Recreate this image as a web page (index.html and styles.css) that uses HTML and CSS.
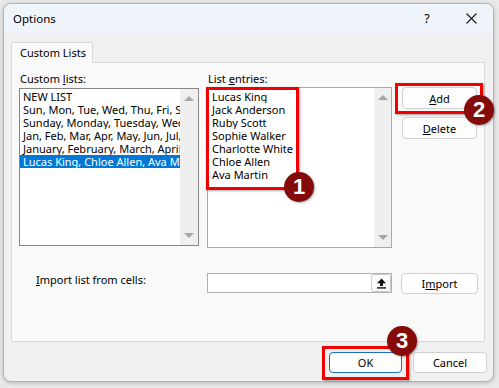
FILE: index.html
```html
<!DOCTYPE html>
<html>
<head>
<meta charset="utf-8">
<link rel="stylesheet" href="styles.css">
</head>
<body>
<div class="stage">
  <div class="window">
    <div class="titlebar">
      <span class="title">Options</span>
      <span class="help">?</span>
      <span class="close"><svg width="11" height="11" viewBox="0 0 11 11"><path d="M0.5 0.5 L10.5 10.5 M10.5 0.5 L0.5 10.5" stroke="#1a1a1a" stroke-width="1.1" fill="none"/></svg></span>
    </div>
    <div class="client">
      <div class="tabs"><div class="tab">Custom Lists</div></div>
      <div class="panel">
        <div class="lists">
          <div class="col col-left">
            <div class="label">Custom <u>l</u>ists:</div>
            <div class="listbox lb-left">
              <div class="items">
                <div class="item">NEW LIST</div>
                <div class="item">Sun, Mon, Tue, Wed, Thu, Fri, Sat</div>
                <div class="item">Sunday, Monday, Tuesday, Wednesday, Thursday, Friday, Saturday</div>
                <div class="item">Jan, Feb, Mar, Apr, May, Jun, Jul, Aug, Sep, Oct, Nov, Dec</div>
                <div class="item">January, February, March, April, May, June</div>
                <div class="item sel">Lucas King, Chloe Allen, Ava Martin</div>
              </div>
              <div class="scrollbar"><span class="arr up"></span><span class="arr down"></span></div>
            </div>
          </div>
          <div class="col col-mid">
            <div class="label">List <u>e</u>ntries:</div>
            <div class="listbox lb-mid">
              <div class="items entries">
                <div class="item">Lucas King</div>
                <div class="item">Jack Anderson</div>
                <div class="item">Ruby Scott</div>
                <div class="item">Sophie Walker</div>
                <div class="item">Charlotte White</div>
                <div class="item">Chloe Allen</div>
                <div class="item">Ava Martin</div>
              </div>
              <div class="scrollbar"><span class="arr up"></span><span class="arr down"></span></div>
            </div>
          </div>
          <div class="col col-right">
            <button class="btn side-btn"><u>A</u>dd</button>
            <button class="btn side-btn"><u>D</u>elete</button>
          </div>
        </div>
        <div class="import-row">
          <div class="import-label"><u>I</u>mport list from cells:</div>
          <div class="ref-input">
            <span class="ref-btn"><svg width="11" height="11" viewBox="0 0 11 11"><path d="M5.5 0.5 L10 5.2 L7 5.2 L7 8 L4 8 L4 5.2 L1 5.2 Z" fill="#111"/><rect x="1" y="9.2" width="9" height="1.4" fill="#111"/></svg></span>
          </div>
          <button class="btn import-btn">I<u>m</u>port</button>
        </div>
      </div>
      <div class="footer">
        <button class="btn ok">OK</button>
        <button class="btn cancel">Cancel</button>
      </div>
    </div>
  </div>

  <div class="mark box1"></div>
  <div class="mark box2"></div>
  <div class="mark box3"></div>
  <div class="badge b1">1</div>
  <div class="badge b2">2</div>
  <div class="badge b3">3</div>
</div>
</body>
</html>
```

FILE: styles.css
```css
* { box-sizing: border-box; }
html, body { margin: 0; padding: 0; }
body {
  background: #e9e9e9;
  font-family: "Noto Sans", "Open Sans", sans-serif;
  font-size: 11px;
  color: #000;
}
.stage {
  position: relative;
  width: 499px;
  height: 388px;
  overflow: hidden;
  padding: 3px 0 0 3px;
}
.window {
  width: 491px;
  height: 379px;
  border: 1px solid #b4b4b4;
  border-radius: 8px;
  overflow: hidden;
  background: #f0f0f0;
  box-shadow: 0 1px 4px rgba(0,0,0,0.22);
}
.titlebar {
  height: 29px;
  background: #eef4f9;
  display: flex;
  align-items: center;
}
.title {
  padding-left: 9px;
  flex: 1;
  font-size: 11.5px;
}
.help {
  width: 44px;
  text-align: center;
  font-size: 12.5px;
}
.close {
  width: 44px;
  display: flex;
  justify-content: center;
  align-items: center;
}
.client {
  padding: 9px 6px 0 7px;
}
.tabs {
  display: flex;
  height: 20px;
}
.tab {
  width: 82px;
  height: 21px;
  background: #f9f9f9;
  border: 1px solid #d9d9d9;
  border-bottom: none;
  padding-left: 8px;
  line-height: 19px;
  position: relative;
  z-index: 1;
}
.panel {
  width: 474px;
  height: 280px;
  border: 1px solid #d9d9d9;
  background: #f9f9f9;
  padding: 8px 0 0 7px;
}
.lists {
  display: flex;
  align-items: flex-start;
}
.label {
  height: 16px;
  line-height: 16px;
  padding-left: 1px;
}
.col-left { width: 180px; }
.col-mid { width: 185px; margin-left: 8px; }
.col-right {
  width: 76px;
  margin-left: 10px;
  padding-top: 16px;
  display: flex;
  flex-direction: column;
  gap: 8px;
}
.listbox {
  display: flex;
  background: #fff;
}
.lb-left {
  margin-top: 1px;
  height: 158px;
  border: 1px solid #858585;
}
.lb-mid {
  height: 161px;
  border: 1px solid #a8a8a8;
}
.items {
  flex: 1;
  min-width: 0;
  padding-top: 1px;
}
.entries { padding-top: 2px; padding-left: 3px; }
.item {
  height: 13px;
  line-height: 13px;
  white-space: nowrap;
  overflow: hidden;
  padding-left: 3px;
}
.entries .item { padding-left: 1px; }
.item.sel {
  background: #0078d7;
  color: #fff;
}
.scrollbar {
  width: 18px;
  background: #efefef;
  display: flex;
  flex-direction: column;
  justify-content: space-between;
  align-items: center;
  padding: 7px 0 7px;
}
.lb-mid .scrollbar { width: 17px; }
.arr {
  width: 0;
  height: 0;
  border-left: 5px solid transparent;
  border-right: 5px solid transparent;
}
.arr.up { border-bottom: 5px solid #a6a6a6; }
.arr.down { border-top: 5px solid #a6a6a6; }

.btn {
  font-family: inherit;
  font-size: 11px;
  color: #000;
  background: #fdfdfd;
  border: 1px solid #d0d0d0;
  border-radius: 4px;
  padding: 0;
  margin: 0;
  height: 22px;
}
.side-btn { width: 75px; }

.import-row {
  display: flex;
  align-items: flex-start;
  margin-top: 25px;
}
.import-label {
  width: 180px;
  padding-left: 17px;
  margin-top: -1px;
  line-height: 16px;
}
.ref-input {
  width: 185px;
  height: 20px;
  margin-left: 8px;
  border: 1px solid #b0b0b0;
  background: #fff;
  display: flex;
  justify-content: flex-end;
  align-items: center;
}
.ref-btn {
  width: 20px;
  height: 18px;
  border: 1px solid #c8c8c8;
  border-radius: 3px;
  background: #fcfcfc;
  display: flex;
  justify-content: center;
  align-items: center;
}
.import-btn {
  width: 77px;
  height: 21px;
  margin-left: 9px;
}
.footer {
  display: flex;
  justify-content: flex-end;
  gap: 11px;
  margin-top: 10px;
}
.ok {
  width: 73px;
  height: 21px;
  border-color: #1b6fc0;
}
.cancel {
  width: 74px;
  height: 21px;
}

.mark {
  position: absolute;
  border: 3px solid #f00000;
  box-shadow: 1px 1px 2px rgba(0,0,0,0.35);
}
.box1 { left: 206px; top: 87px; width: 93px; height: 103px; }
.box2 { left: 395px; top: 83px; width: 88px; height: 31px; }
.box3 { left: 322px; top: 346px; width: 87px; height: 34px; }

.badge {
  position: absolute;
  width: 30px;
  height: 30px;
  border-radius: 50%;
  background: #850b0b;
  color: #fff;
  font-family: "Liberation Sans", Arial, sans-serif;
  font-weight: bold;
  font-size: 22px;
  line-height: 30px;
  text-align: center;
  box-shadow: 1px 1px 2px rgba(0,0,0,0.35);
}
.b1 { left: 284px; top: 172px; }
.b2 { left: 464px; top: 95px; }
.b3 { left: 387px; top: 326px; }
```
